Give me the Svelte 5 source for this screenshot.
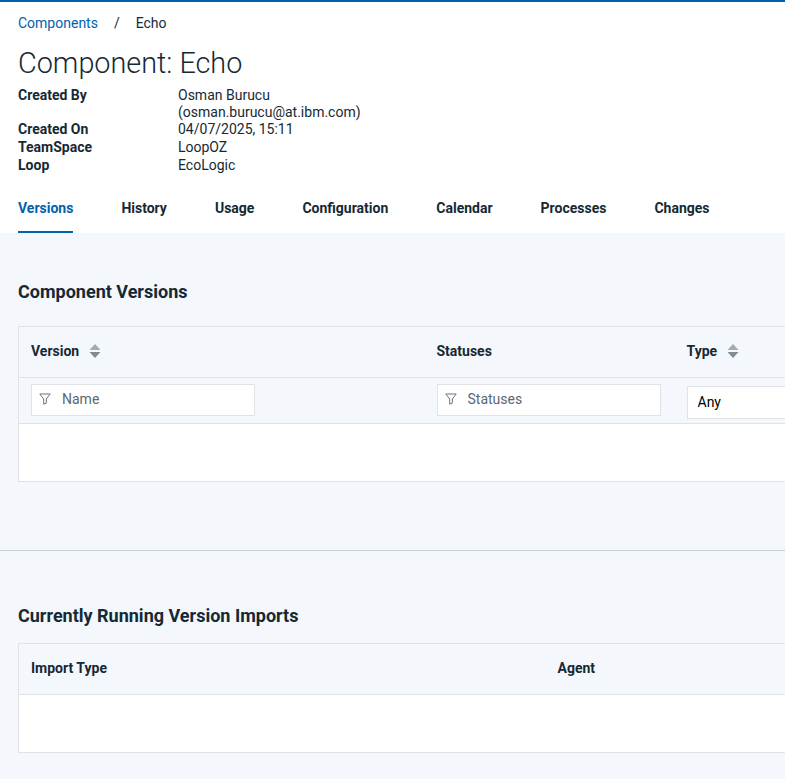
<script>
  const tabs = ['Versions', 'History', 'Usage', 'Configuration', 'Calendar', 'Processes', 'Changes'];
</script>

{#snippet sortIcon()}
  <svg class="sort" width="12" height="16" viewBox="0 0 12 16" aria-hidden="true">
    <path d="M6 1l5.5 6H.5z" fill="#a2abb3" />
    <path d="M6 15L.5 9h11z" fill="#7f8b95" />
  </svg>
{/snippet}

{#snippet filterIcon()}
  <svg class="funnel" width="12" height="12" viewBox="0 0 12 12" aria-hidden="true">
    <path d="M.8 1h10.4L7.3 6v4.2l-2.6 1V6z" fill="none" stroke="#68737d" stroke-width="1" stroke-linejoin="round" />
  </svg>
{/snippet}

<div class="page">
  <header class="head">
    <nav class="crumbs">
      <a href="#components">Components</a>
      <span class="sep">/</span>
      <span>Echo</span>
    </nav>
    <h1>Component: Echo</h1>
    <dl class="meta">
      <dt>Created By</dt>
      <dd class="narrow">Osman Burucu (osman.burucu@at.ibm.com)</dd>
      <dt>Created On</dt>
      <dd>04/07/2025, 15:11</dd>
      <dt>TeamSpace</dt>
      <dd>LoopOZ</dd>
      <dt>Loop</dt>
      <dd>EcoLogic</dd>
    </dl>
    <div class="tabs">
      {#each tabs as tab, i}
        <button class="tab" class:active={i === 0}>{tab}</button>
      {/each}
    </div>
  </header>

  <section class="versions">
    <h2>Component Versions</h2>
    <table class="versions-table">
      <thead>
        <tr class="titles">
          <th><span class="th-in">Version {@render sortIcon()}</span></th>
          <th>Statuses</th>
          <th><span class="th-in">Type {@render sortIcon()}</span></th>
        </tr>
        <tr class="filters">
          <th>
            <div class="filter">{@render filterIcon()}<input placeholder="Name" /></div>
          </th>
          <th>
            <div class="filter">{@render filterIcon()}<input placeholder="Statuses" /></div>
          </th>
          <th>
            <select><option>Any</option></select>
          </th>
        </tr>
      </thead>
      <tbody>
        <tr class="empty"><td colspan="3"></td></tr>
      </tbody>
    </table>
  </section>

  <section class="imports">
    <h2>Currently Running Version Imports</h2>
    <table class="imports-table">
      <thead>
        <tr class="titles">
          <th>Import Type</th>
          <th>Agent</th>
        </tr>
      </thead>
      <tbody>
        <tr class="empty"><td colspan="2"></td></tr>
      </tbody>
    </table>
  </section>
</div>

<style>
  :global(body) {
    margin: 0;
    background: #f4f7fb;
    overflow: hidden;
  }

  .page {
    width: 785px;
    height: 779px;
    overflow: hidden;
    font-family: Roboto, "Liberation Sans", sans-serif;
    font-size: 14px;
    color: #152935;
    background: #f4f7fb;
  }

  .head {
    height: 231px;
    padding: 0 18px;
    background: #fff;
    border-top: 2px solid #0062ae;
  }

  .crumbs {
    display: flex;
    align-items: center;
    height: 16px;
    padding-top: 13px;
  }

  .crumbs a {
    color: #0062ae;
    text-decoration: none;
  }

  .sep {
    margin: 0 16px;
  }

  h1 {
    margin: 14px 0 0;
    font-size: 28.8px;
    line-height: 36px;
    font-weight: 300;
  }

  .meta {
    display: grid;
    grid-template-columns: 160px 1fr;
    row-gap: 1px;
    margin: 6px 0 0;
    line-height: 16.7px;
  }

  dt {
    font-weight: 700;
  }

  dd {
    margin: 0;
  }

  .narrow {
    max-width: 200px;
  }

  .tabs {
    display: flex;
    gap: 48px;
    margin-top: 24px;
  }

  .tab {
    height: 35px;
    padding: 0 0 12px;
    border: 0;
    border-bottom: 2px solid transparent;
    background: none;
    font: inherit;
    font-weight: 700;
    color: inherit;
    cursor: pointer;
  }

  .tab.active {
    color: #0062ae;
    border-bottom-color: #0062ae;
  }

  h2 {
    margin: 0;
    font-size: 18px;
    line-height: 22px;
    font-weight: 700;
  }

  .versions {
    height: 318px;
    box-sizing: border-box;
    padding: 48px 0 0 18px;
    border-bottom: 1px solid #c9d0d6;
  }

  .imports {
    padding: 54px 0 0 18px;
  }

  table {
    border-collapse: collapse;
    table-layout: fixed;
    width: 920px;
    margin-top: 23px;
    background: #fff;
  }

  .imports-table {
    margin-top: 16px;
  }

  .versions-table th:nth-child(1) {
    width: 406px;
  }

  .versions-table th:nth-child(2) {
    width: 250px;
  }

  .imports-table th:nth-child(1) {
    width: 527px;
  }

  th,
  td {
    box-sizing: border-box;
    padding: 0 12px;
    text-align: left;
    background: #f4f7fb;
    border: 1px solid #dfe3e6;
    border-left: 0;
    border-right: 0;
  }

  tr > :first-child {
    border-left: 1px solid #dfe3e6;
  }

  th {
    font-weight: 700;
  }

  .titles th {
    height: 51px;
    padding-bottom: 2px;
  }

  .th-in {
    display: flex;
    align-items: center;
    gap: 10px;
  }

  .sort {
    flex: none;
  }

  .filters th {
    height: 46px;
    font-weight: 400;
    vertical-align: top;
  }

  .filter {
    display: flex;
    align-items: center;
    gap: 11px;
    box-sizing: border-box;
    width: 224px;
    height: 32px;
    margin-top: 6px;
    padding: 0 0 2px 7px;
    background: #fff;
    border: 1px solid #dfe3e6;
  }

  .funnel {
    flex: none;
  }

  input {
    flex: 1;
    min-width: 0;
    padding: 0;
    border: 0;
    outline: 0;
    font: inherit;
    color: #152935;
    background: none;
  }

  input::placeholder {
    color: #5a6872;
    opacity: 1;
  }

  select {
    display: block;
    box-sizing: border-box;
    width: 224px;
    height: 33px;
    margin-top: 8px;
    padding: 0 10px 2px;
    border: 1px solid #dfe3e6;
    border-radius: 0;
    appearance: none;
    font: inherit;
    color: #000;
    background: #fff;
  }

  .empty td {
    height: 58px;
    background: #fff;
  }
</style>
